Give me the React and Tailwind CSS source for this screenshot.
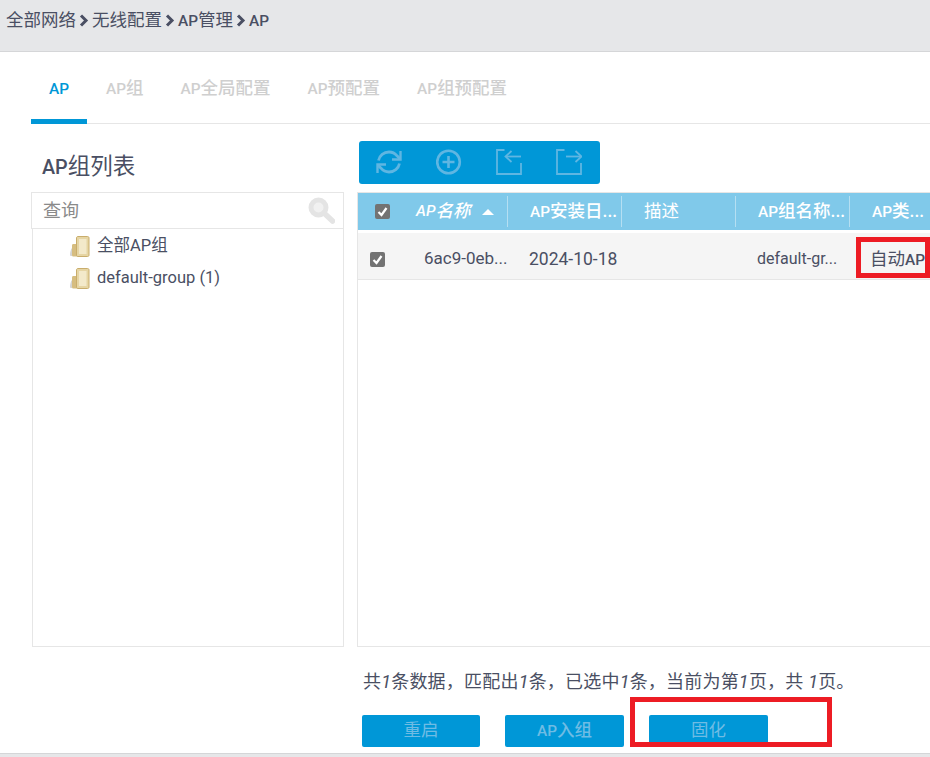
const font = { fontFamily: 'Roboto, "Noto Sans CJK SC", sans-serif' }

// latin runs are narrower than the chinese next to them in the original
function Mix({ text }) {
  return text.split(/([A-Za-z]+)/).map((part, i) =>
    /^[A-Za-z]+$/.test(part)
      ? <span key={i} className="text-[0.88em] font-medium">{part}</span>
      : <span key={i}>{part}</span>
  )
}

function FolderIcon() {
  return (
    <svg width="20" height="21" viewBox="0 0 20 21" className="shrink-0">
      <path d="M0 19c0-3 1-6 2-7v8c-1 0-2 0-2-1z" fill="#d4d4d4" />
      <path d="M2 9.500C2 8.500 2.600 8 3.500 8H8v12.500H3.500C2.600 20.500 2 20 2 19z" fill="#d6bd80" />
      <path d="M6.500 2C6.500 1 7.100 .500 8 .500h9.500C18.400 .500 19 1 19 2v17c0 1-.6 1.500-1.500 1.500H8c-.9 0-1.500-.5-1.500-1.500z" fill="#e6d5a4" stroke="#c9ad6c" />
      <path d="M9 3h7.500v15H9z" fill="#f3e9ca" />
    </svg>
  )
}

function RefreshIcon() {
  return (
    <svg width="26" height="26" viewBox="0 0 26 26" fill="none" stroke="#5fb6e2" strokeWidth="2.800">
      <path d="M2.500 11.500C3.500 6.500 7.800 3 13 3c3.300 0 6 1.400 8 3.800l3 3" />
      <path d="M24.500 2v8.500H16" strokeWidth="2.400" />
      <path d="M23.500 14.500C22.500 19.500 18.200 23 13 23c-3.300 0-6-1.400-8-3.800l-3-3" />
      <path d="M1.500 24v-8.500H10" strokeWidth="2.400" />
    </svg>
  )
}

function PlusIcon() {
  return (
    <svg width="26" height="26" viewBox="0 0 26 26" fill="none" stroke="#5fb6e2" strokeWidth="2.600">
      <circle cx="12.500" cy="13" r="11.300" />
      <path d="M12.500 7v12M6.500 13h12" />
    </svg>
  )
}

function ImportIcon() {
  return (
    <svg width="26" height="26" viewBox="0 0 26 26" fill="none" stroke="#5fb6e2" strokeWidth="1.800">
      <path d="M8.500 1H1v24h24V14" />
      <path d="M25 7.500H10" />
      <path d="M15.500 2l-6 5.500 6 5.500" />
    </svg>
  )
}

function ExportIcon() {
  return (
    <svg width="26" height="26" viewBox="0 0 26 26" fill="none" stroke="#5fb6e2" strokeWidth="1.800">
      <path d="M8.500 1H1v24h24V14" />
      <path d="M10 7.500h15" />
      <path d="M19.500 2l6 5.500-6 5.500" />
    </svg>
  )
}

function SearchIcon() {
  return (
    <svg width="27" height="27" viewBox="0 0 27 27" fill="none" stroke="#e4e4e4">
      <circle cx="10.500" cy="10.500" r="7.500" strokeWidth="5" fill="#f1f1f1" />
      <path d="M16 16l8.500 8" strokeWidth="5.500" strokeLinecap="round" />
    </svg>
  )
}

function Check() {
  return (
    <span className="flex h-[15px] w-[15px] items-center justify-center rounded-[2px] bg-[#737373]">
      <svg width="11" height="11" viewBox="0 0 11 11" fill="none" stroke="#fff" strokeWidth="2.200">
        <path d="M1.500 6l3 3 5-7" />
      </svg>
    </span>
  )
}

function Chevron() {
  return (
    <svg width="10" height="13" viewBox="0 0 10 13" fill="none" stroke="#4a4f63" strokeWidth="3" className="mx-[3px] shrink-0">
      <path d="M2 1.500l5 5-5 5" />
    </svg>
  )
}

const tabs = ['AP', 'AP组', 'AP全局配置', 'AP预配置', 'AP组预配置']
const crumbs = ['全部网络', '无线配置', 'AP管理', 'AP']
const headers = ['AP安装日...', '描述', 'AP组名称...', 'AP类...']

export default function App() {
  return (
    <div style={font} className="relative h-[757px] w-[930px] overflow-hidden bg-white text-[#4a4f63]">
      <div className="flex h-[52px] items-start border-b border-[#d5d6d8] bg-[#e6e7e9] pl-[6px] pt-[8px] text-[17.5px] leading-[24px]">
        {crumbs.map((c, i) => (
          <div key={c} className="flex items-center">
            {i > 0 && <Chevron />}
            <span><Mix text={c} /></span>
          </div>
        ))}
      </div>

      <div className="ml-[31px] flex h-[72px] border-b border-[#e6e6e6] text-[17.5px] font-medium text-[#cfcfcf]">
        {tabs.map((t, i) => (
          <div
            key={t}
            className={i === 0
              ? 'mr-[19px] -mb-px w-[56px] border-b-[5px] border-[#0097d7] pt-[24px] text-center leading-[24px] text-[#0097d7]'
              : 'mr-[37px] pt-[24px] leading-[24px]'}
          >
            <Mix text={t} />
          </div>
        ))}
      </div>

      <div className="flex">
        <div className="ml-[31px] w-[313px]">
          <div className="h-[68px] pl-[11px] pt-[26px] text-[22.5px] leading-[32px]"><Mix text="AP组列表" /></div>
          <div className="flex h-[37px] items-center justify-between border border-[#e6e6e6] pl-[11px] pr-[8px] text-[18px] text-[#8a8a8a]">
            <span>查询</span>
            <SearchIcon />
          </div>
          <div className="ml-px h-[418px] border-x border-b border-[#e6e6e6] pl-[37px] pt-[1px] text-[16.5px]">
            <div className="flex h-[32px] items-center gap-[7px]">
              <FolderIcon />
              <span>全部AP组</span>
            </div>
            <div className="flex h-[32px] items-center gap-[7px]">
              <FolderIcon />
              <span>default-group (1)</span>
            </div>
          </div>
        </div>

        <div className="ml-[13px] flex-1">
          <div className="ml-[2px] mt-[17px] flex h-[43px] w-[241px] items-center gap-[34px] rounded-[3px] bg-[#0097d7] pb-[2px] pl-[17px]">
            <RefreshIcon />
            <PlusIcon />
            <ImportIcon />
            <ExportIcon />
          </div>

          <div className="mt-[8px] h-[455px] border border-r-0 border-[#e6e6e6]">
            <div className="flex h-[37px] items-center bg-[#80c9ea] text-[17.5px] font-medium text-white">
              <div className="flex w-[36px] justify-center pl-[13px]"><Check /></div>
              <div className="flex h-[31px] w-[114px] items-center border-r border-[#b5dff2] pl-[22px] italic">
                <Mix text="AP名称" />
                <span className="ml-[12px] h-0 w-0 border-x-[6px] border-b-[6px] border-x-transparent border-b-white" />
              </div>
              {headers.map((h, i) => (
                <div
                  key={h}
                  className={i === 1
                    ? 'flex h-[31px] w-[114px] items-center border-r border-[#b5dff2] pl-[22px] font-normal'
                    : i === 3
                      ? 'flex h-[31px] w-[80px] items-center whitespace-nowrap pl-[22px]'
                      : 'flex h-[31px] w-[114px] items-center whitespace-nowrap border-r border-[#b5dff2] pl-[22px]'}
                >
                  <span><Mix text={h} /></span>
                </div>
              ))}
            </div>
            <div className="mt-[3px] flex h-[47px] items-center border-b border-[#e6e6e6] bg-[#f5f5f5] pt-[6px] text-[16px]">
              <div className="flex w-[39px] justify-center"><Check /></div>
              <div className="w-[111px] pl-[27px] text-[17px]">6ac9-0eb...</div>
              <div className="w-[228px] pl-[21px] text-[17.5px]">2024-10-18</div>
              <div className="w-[113px] pl-[21px]">default-gr...</div>
              <div className="overflow-hidden whitespace-nowrap pl-[21px] text-[17.5px]"><Mix text="自动AP" /></div>
            </div>
          </div>

          <div className="ml-[6px] mt-[23px] text-[18px] leading-[24px] tracking-[0.2px]">
            共<i>1</i>条数据，匹配出<i>1</i>条，已选中<i>1</i>条，当前为第<i>1</i>页，共 <i>1</i>页。
          </div>
          <div className="ml-[5px] mt-[21px] flex gap-[25px] text-[17.5px] text-[#6fbce4]">
            <div className="flex h-[32px] w-[118px] items-center justify-center rounded-[2px] bg-[#0097d7] pb-px">重启</div>
            <div className="flex h-[32px] w-[119px] items-center justify-center rounded-[2px] bg-[#0097d7] pb-px font-medium"><span><Mix text="AP入组" /></span></div>
            <div className="flex h-[32px] w-[119px] items-center justify-center rounded-[2px] bg-[#0097d7] pb-px">固化</div>
          </div>
        </div>
      </div>

      <div className="absolute bottom-0 left-0 h-[4px] w-full border-t border-[#d5d6d8] bg-[#e6e7e9]" />

      {/* red marks drawn over the page */}
      <div className="absolute left-[856px] top-[237px] h-[41px] w-[74px] border-[5px] border-[#ed1c24]" />
      <div className="absolute left-[630px] top-[697px] h-[50px] w-[202px] border-[5px] border-[#ed1c24]" />
    </div>
  )
}
